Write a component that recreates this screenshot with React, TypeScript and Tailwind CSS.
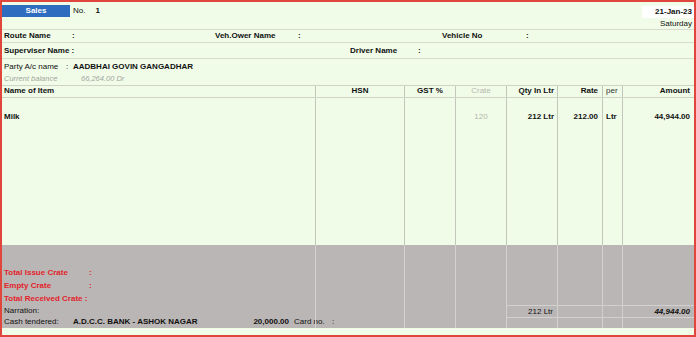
/**
 * SalesVoucher — Tally-style sales entry screen with crate / vehicle fields.
 * Header fields on top, item grid in the middle, crate totals and
 * payment summary in the grey footer band.
 */

const COLS = "grid grid-cols-[313px_89px_51px_51px_51px_45px_20px_72px]";

export default function App() {
  return (
    <div className="flex h-[337px] w-[696px] flex-col border-2 border-[#e0463c] bg-[#f0fce8] font-['Liberation_Sans',Arial,sans-serif] text-[8px] leading-[12px] text-[#111]">
      {/* voucher type + date */}
      <div className="flex h-[28px] justify-between border-b border-[#d7dccf]">
        <div className="flex items-start pt-[3px]">
          <div className="flex h-[12px] w-[68px] items-center justify-center bg-[#2e6cbf] font-bold text-white">
            Sales
          </div>
          <span className="ml-[3px]">No.</span>
          <span className="ml-[10px] font-bold">1</span>
        </div>
        <div className="flex flex-col items-end pt-[4px]">
          <div className="h-[12px] w-[52px] bg-white pr-[2px] text-right font-bold">21-Jan-23</div>
          <div className="pr-[2px] leading-[11px]">Saturday</div>
        </div>
      </div>

      <div className="flex h-[13px] items-center border-b border-[#d7dccf] pl-[2px] font-bold">
        <span className="w-[68px]">Route Name</span>
        <span className="w-[143px]">:</span>
        <span className="w-[83px]">Veh.Ower Name</span>
        <span className="w-[144px]">:</span>
        <span className="w-[84px]">Vehicle No</span>
        <span>:</span>
      </div>

      <div className="flex h-[16px] items-center border-b border-[#d7dccf] pl-[2px] font-bold">
        <span className="w-[346px]">Superviser Name :</span>
        <span className="w-[68px]">Driver Name</span>
        <span>:</span>
      </div>

      <div className="flex h-[14px] items-end pl-[2px]">
        <span className="w-[62px]">Party A/c name</span>
        <span className="w-[7px]">:</span>
        <span className="font-bold">AADBHAI GOVIN GANGADHAR</span>
      </div>
      <div className="flex h-[12px] items-center pl-[2px] text-[7.5px] italic text-[#a3a6a0]">
        <span className="w-[77px]">Current balance</span>
        <span>66,264.00 Dr</span>
      </div>

      {/* item grid header */}
      <div className={`${COLS} h-[13px] border-y border-[#cfd3c6] leading-[10px]`}>
        <div className="pl-[2px] font-bold">Name of Item</div>
        <div className="border-l border-[#c3c7bb] text-center font-bold">HSN</div>
        <div className="border-l border-[#c3c7bb] text-center font-bold">GST %</div>
        <div className="border-l border-[#c3c7bb] text-center text-[#b5b8b0]">Crate</div>
        <div className="border-l border-[#c3c7bb] pr-[3px] text-right font-bold">Qty In Ltr</div>
        <div className="border-l border-[#c3c7bb] pr-[4px] text-right font-bold">Rate</div>
        <div className="border-l border-[#c3c7bb] pl-[3px] text-[#333]">per</div>
        <div className="border-l border-[#c3c7bb] pr-[4px] text-right font-bold">Amount</div>
      </div>

      {/* item rows */}
      <div className={`${COLS} flex-1`}>
        <div className="pl-[2px] pt-[13px] font-bold">Milk</div>
        <div className="border-l border-[#c3c7bb]" />
        <div className="border-l border-[#c3c7bb]" />
        <div className="border-l border-[#c3c7bb] pt-[13px] text-center text-[#b5b8b0]">120</div>
        <div className="border-l border-[#c3c7bb] pr-[3px] pt-[13px] text-right font-bold">212 Ltr</div>
        <div className="border-l border-[#c3c7bb] pr-[4px] pt-[13px] text-right font-bold">212.00</div>
        <div className="border-l border-[#c3c7bb] pl-[3px] pt-[13px] font-bold">Ltr</div>
        <div className="border-l border-[#c3c7bb] pr-[4px] pt-[13px] text-right font-bold">44,944.00</div>
      </div>

      {/* footer band */}
      <div className={`${COLS} h-[83px] bg-[#bab6b5]`}>
        <div className="flex flex-col whitespace-nowrap pl-[2px] pt-[21px]">
          <div className="flex h-[13px] items-center font-bold text-[#e3232b]">
            <span className="w-[85px] shrink-0">Total Issue Crate</span>
            <span>:</span>
          </div>
          <div className="flex h-[13px] items-center font-bold text-[#e3232b]">
            <span className="w-[85px] shrink-0">Empty Crate</span>
            <span>:</span>
          </div>
          <div className="flex h-[13px] items-center font-bold text-[#e3232b]">
            <span>Total Received Crate :</span>
          </div>
          <div className="flex h-[11px] items-center">Narration:</div>
          <div className="flex h-[12px] items-center">
            <span className="w-[69px] shrink-0">Cash tendered:</span>
            <span className="w-[150px] shrink-0 font-bold">A.D.C.C. BANK - ASHOK NAGAR</span>
            <span className="w-[66px] shrink-0 text-right font-bold">20,000.00</span>
            <span className="ml-[5px] w-[38px] shrink-0">Card no.</span>
            <span className="shrink-0">:</span>
          </div>
        </div>
        <div className="border-l border-[#d3d1cf]" />
        <div className="border-l border-[#d3d1cf]" />
        <div className="border-l border-[#d3d1cf]" />
        <div className="flex flex-col justify-end border-l border-[#d3d1cf] pb-[10px]">
          <div className="h-[13px] border-y border-[#d3d1cf] pr-[4px] text-right leading-[11px]">212 Ltr</div>
        </div>
        <div className="flex flex-col justify-end border-l border-[#d3d1cf] pb-[10px]">
          <div className="h-[13px] border-y border-[#d3d1cf]" />
        </div>
        <div className="flex flex-col justify-end border-l border-[#d3d1cf] pb-[10px]">
          <div className="h-[13px] border-y border-[#d3d1cf]" />
        </div>
        <div className="flex flex-col justify-end border-l border-[#d3d1cf] pb-[10px]">
          <div className="h-[13px] border-y border-[#d3d1cf] pr-[4px] text-right font-bold italic leading-[11px]">
            44,944.00
          </div>
        </div>
      </div>
      <div className="h-[7px]" />
    </div>
  );
}
